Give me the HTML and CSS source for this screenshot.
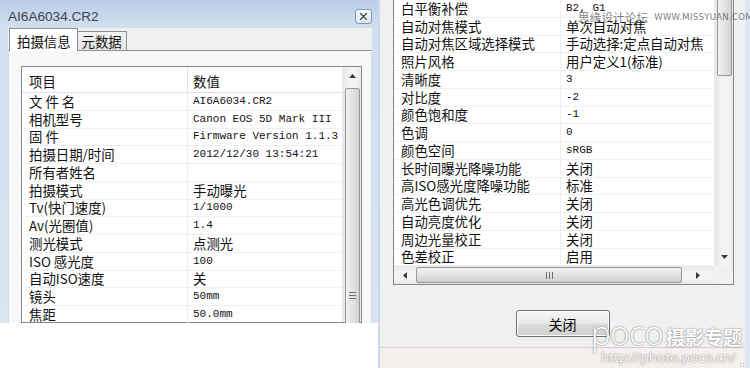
FILE: index.html
```html
<!DOCTYPE html>
<html lang="zh-CN">
<head>
    <meta charset="UTF-8">
    <title>AI6A6034.CR2</title>
<link rel="stylesheet" href="styles.css">
</head>
<body>

<!-- 左：拍摄信息窗口 -->
<div class="left">
    <div class="win-left">
        <div class="titlebar">
            <span class="title">AI6A6034.CR2</span>
            <span class="xbtn">
                <svg width="17" height="15" viewBox="0 0 17 15">
                    <defs>
                        <linearGradient id="xg" x1="0" y1="0" x2="0" y2="1">
                            <stop offset="0" stop-color="#f7f9fc"/>
                            <stop offset="1" stop-color="#d9e2ee"/>
                        </linearGradient>
                    </defs>
                    <rect x="0.5" y="0.5" width="16" height="14" rx="2.5" fill="url(#xg)" stroke="#8797ad"/>
                    <path d="M5.5 4.5 L11.5 10.5 M11.5 4.5 L5.5 10.5" stroke="#ffffff" stroke-width="3.4" stroke-linecap="round"/>
                    <path d="M5.5 4.5 L11.5 10.5 M11.5 4.5 L5.5 10.5" stroke="#4b5563" stroke-width="1.6" stroke-linecap="round"/>
                </svg>
            </span>
        </div>
        <div class="winbody">
            <div class="tabs">
                <span class="tab active">拍摄信息</span>
                <span class="tab">元数据</span>
            </div>
            <div class="page">
                <div class="listbox">
                    <div class="list">
                        <div class="row head"><span class="k">项目</span><span class="v">数值</span></div>
                        <div class="row"><span class="k wide">文件名</span><span class="v mono">AI6A6034.CR2</span></div>
                        <div class="row"><span class="k">相机型号</span><span class="v mono">Canon EOS 5D Mark III</span></div>
                        <div class="row"><span class="k wide">固件</span><span class="v mono">Firmware Version 1.1.3</span></div>
                        <div class="row"><span class="k">拍摄日期/时间</span><span class="v mono">2012/12/30 13:54:21</span></div>
                        <div class="row"><span class="k">所有者姓名</span><span class="v"></span></div>
                        <div class="row"><span class="k">拍摄模式</span><span class="v">手动曝光</span></div>
                        <div class="row"><span class="k">Tv(快门速度)</span><span class="v mono">1/1000</span></div>
                        <div class="row"><span class="k">Av(光圈值)</span><span class="v mono">1.4</span></div>
                        <div class="row"><span class="k">测光模式</span><span class="v">点测光</span></div>
                        <div class="row"><span class="k">ISO 感光度</span><span class="v mono">100</span></div>
                        <div class="row"><span class="k">自动ISO速度</span><span class="v">关</span></div>
                        <div class="row"><span class="k">镜头</span><span class="v mono">50mm</span></div>
                        <div class="row"><span class="k">焦距</span><span class="v mono">50.0mm</span></div>
                    </div>
                    <div class="vscroll">
                        <span class="arrow">
                            <svg width="7" height="4" viewBox="0 0 7 4"><path d="M0 4 L3.5 0 L7 4 Z" fill="#3a3a3a"/></svg>
                        </span>
                        <div class="thumb tall">
                            <span class="grip-h"></span>
                        </div>
                    </div>
                </div>
            </div>
        </div>
    </div>
</div>

<!-- 右：拍摄信息（续） -->
<div class="right">
    <div class="listbox rbox">
        <div class="lb-main">
            <div class="list">
                <div class="row"><span class="k">白平衡补偿</span><span class="v mono">B2, G1</span></div>
                <div class="row"><span class="k">自动对焦模式</span><span class="v">单次自动对焦</span></div>
                <div class="row"><span class="k">自动对焦区域选择模式</span><span class="v">手动选择:定点自动对焦</span></div>
                <div class="row"><span class="k">照片风格</span><span class="v">用户定义1(标准)</span></div>
                <div class="row"><span class="k">清晰度</span><span class="v mono">3</span></div>
                <div class="row"><span class="k">对比度</span><span class="v mono">-2</span></div>
                <div class="row"><span class="k">颜色饱和度</span><span class="v mono">-1</span></div>
                <div class="row"><span class="k">色调</span><span class="v mono">0</span></div>
                <div class="row"><span class="k">颜色空间</span><span class="v mono">sRGB</span></div>
                <div class="row"><span class="k">长时间曝光降噪功能</span><span class="v">关闭</span></div>
                <div class="row"><span class="k">高ISO感光度降噪功能</span><span class="v">标准</span></div>
                <div class="row"><span class="k">高光色调优先</span><span class="v">关闭</span></div>
                <div class="row"><span class="k">自动亮度优化</span><span class="v">关闭</span></div>
                <div class="row"><span class="k">周边光量校正</span><span class="v">关闭</span></div>
                <div class="row"><span class="k">色差校正</span><span class="v">启用</span></div>
            </div>
            <div class="vscroll rv">
                <div class="thumb short"></div>
                <div class="track"></div>
                <span class="arrow">
                    <svg width="7" height="4" viewBox="0 0 7 4"><path d="M0 0 L7 0 L3.5 4 Z" fill="#3a3a3a"/></svg>
                </span>
            </div>
        </div>
        <div class="hscroll">
            <span class="harrow">
                <svg width="4" height="7" viewBox="0 0 4 7"><path d="M4 0 L4 7 L0 3.5 Z" fill="#3a3a3a"/></svg>
            </span>
            <div class="hthumb"><span class="grip-v"></span></div>
            <span class="harrow">
                <svg width="4" height="7" viewBox="0 0 4 7"><path d="M0 0 L4 3.5 L0 7 Z" fill="#3a3a3a"/></svg>
            </span>
            <span class="corner"></span>
        </div>
    </div>

    <div class="buttons">
        <span class="btn">关闭</span>
    </div>

    <div class="statusbar"><span class="sizegrip"></span></div>

    <!-- 水印 -->
    <div class="mark-top"><span class="cn">思缘设计论坛</span><span class="en">WWW.MISSYUAN.COM</span></div>
    <div class="mark-poco">
        <div class="logo"><span class="p">poco</span><span class="zt">摄影专题</span></div>
        <div class="url">http://photo.poco.cn/</div>
    </div>
</div>

</body>
</html>
```

FILE: styles.css
```css
body {
    margin: 0;
    width: 750px;
    height: 368px;
    overflow: hidden;
    display: flex;
    background: #ffffff;
    color: #111111;
    font-family: "Noto Sans CJK SC", sans-serif;
    font-size: 13.4px;
}

/* ---- left window ---- */
.left {
    width: 378px;
    background: #ffffff;
}
.win-left {
    height: 323px;
    overflow: hidden;
    display: flex;
    flex-direction: column;
    background: linear-gradient(#b9cde6, #d0dfef 26px, #d9e5f2);
}
.titlebar {
    flex: none;
    height: 28px;
    display: flex;
    align-items: flex-start;
    justify-content: space-between;
    padding: 9px 6px 0 8px;
    box-sizing: border-box;
}
.title {
    font-family: "Liberation Sans", sans-serif;
    font-size: 13.6px;
    line-height: 16px;
    color: #3d4450;
}
.xbtn {
    display: flex;
}
.winbody {
    flex: 1;
    min-height: 0;
    margin: 0 6px 0 8px;
    background: #f0f0f0;
    display: flex;
    flex-direction: column;
}
.tabs {
    flex: none;
    height: 22px;
    display: flex;
    align-items: flex-end;
    padding-left: 1px;
}
.tab {
    height: 18px;
    padding: 0 4px 0 4px;
    border: 1px solid #8e9199;
    border-bottom: none;
    background: linear-gradient(#f4f4f4, #e2e2e2);
    display: flex;
    align-items: center;
    font-size: 13.4px;
    line-height: 16px;
    margin-left: -1px;
}
.tab.active {
    height: 23px;
    padding: 2px 6px 0 7px;
    box-sizing: border-box;
    background: #ffffff;
    margin-bottom: -1px;
    position: relative;
    z-index: 1;
    margin-left: 0;
}
.page {
    flex: 1;
    min-height: 0;
    border-top: 1px solid #8e9199;
    border-left: 1px solid #dadada;
    border-right: 1px solid #dadada;
    background: #f8f8f8;
    padding: 15px 9px 0 12px;
    display: flex;
}
.listbox {
    flex: 1;
    border: 1px solid #828790;
    background: #ffffff;
    display: flex;
}
.page .listbox {
    align-items: flex-start;
}

/* ---- list rows ---- */
.list {
    flex: 1;
}
.row {
    height: 17.75px;
    display: flex;
    align-items: center;
    border-bottom: 1px solid #f0f0f0;
    box-sizing: border-box;
    white-space: nowrap;
    line-height: 17px;
}
.row.head {
    height: 26px;
    border-bottom: 1px solid #e3e3e3;
}
.k {
    width: 166px;
    flex: none;
    padding-left: 7px;
    box-sizing: border-box;
    border-right: 1px solid #eeeeee;
    align-self: stretch;
    display: flex;
    align-items: center;
}
.head .k, .head .v {
    padding-top: 4px;
}
.head .k {
    border-right: 1px solid #e3e3e3;
}
.k.wide {
    letter-spacing: 3px;
}
.v {
    padding-left: 5px;
    display: flex;
    align-items: center;
}
.v.mono {
    font-family: "Liberation Mono", monospace;
    font-size: 11px;
}

/* ---- scrollbars ---- */
.vscroll {
    width: 18px;
    flex: none;
    align-self: stretch;
    display: flex;
    flex-direction: column;
    align-items: center;
    background: linear-gradient(90deg, #e6e6e6, #f4f4f4 40%, #f4f4f4 70%, #e8e8e8);
    border-left: 1px solid #ececec;
}
.vscroll .arrow {
    flex: none;
    height: 17px;
    display: flex;
    align-items: center;
    justify-content: center;
}
.thumb {
    flex: none;
    width: 15px;
    box-sizing: border-box;
    border: 1px solid #979797;
    border-radius: 2px;
    background: linear-gradient(90deg, #f1f1f1, #e3e3e3 50%, #d2d2d2);
    display: flex;
    flex-direction: column;
    align-items: center;
}
.thumb.tall {
    margin-top: 4px;
    height: 400px;
    padding-top: 203px;
}
.grip-h {
    width: 7px;
    height: 7px;
    background: repeating-linear-gradient(#707070 0 1px, transparent 1px 3px);
}
.thumb.short {
    height: 78px;
    margin-top: -2px;
}
.track {
    flex: 1;
}
.rv .arrow {
    height: 18px;
}

/* ---- right window ---- */
.right {
    flex: 1;
    position: relative;
    background: #f0f0f0;
    border-left: 2px solid #c9d9eb;
    border-right: 5px solid #dce7f3;
    display: flex;
    flex-direction: column;
}
.rbox {
    flex: none;
    margin: 0 11px 0 13px;
    border-top: none;
    flex-direction: column;
}
.lb-main {
    display: flex;
}
.rbox .k {
    width: 167px;
}
.hscroll {
    height: 18px;
    display: flex;
    align-items: center;
    background: linear-gradient(#e9e9e9, #f4f4f4 40%, #f4f4f4 70%, #e6e6e6);
}
.harrow {
    width: 22px;
    display: flex;
    justify-content: center;
}
.hthumb {
    width: 266px;
    height: 16px;
    box-sizing: border-box;
    border: 1px solid #979797;
    border-radius: 2px;
    background: linear-gradient(#f2f2f2, #e2e2e2 50%, #d0d0d0);
    display: flex;
    align-items: center;
    justify-content: center;
}
.hthumb + .harrow {
    width: 31px;
}
.grip-v {
    width: 7px;
    height: 7px;
    background: repeating-linear-gradient(90deg, #707070 0 1px, transparent 1px 3px);
}
.corner {
    flex: 1;
    align-self: stretch;
    background: #f0f0f0;
}
.buttons {
    display: flex;
    justify-content: center;
    padding-top: 25px;
}
.btn {
    width: 94px;
    height: 27px;
    box-sizing: border-box;
    border: 1px solid #707070;
    border-radius: 3px;
    background: linear-gradient(#f6f6f6, #ebebeb 48%, #dddddd 52%, #cfcfcf);
    box-shadow: inset 0 0 0 1px #fbfbfb;
    display: flex;
    align-items: center;
    justify-content: center;
    font-size: 14px;
    color: #000000;
}
.statusbar {
    margin-top: auto;
    height: 20px;
    border-top: 1px solid #d2d2d2;
    background: #f5efee;
    display: flex;
    justify-content: flex-end;
    align-items: flex-end;
}
.sizegrip {
    width: 6px;
    height: 6px;
    background: radial-gradient(circle, #b8b8b8 0.8px, transparent 1px) 0 0 / 3px 3px;
}

/* ---- watermarks ---- */
.mark-top {
    position: absolute;
    top: 9px;
    left: 198px;
    display: flex;
    align-items: center;
    gap: 6px;
    color: rgba(70, 70, 70, 0.7);
    white-space: nowrap;
}
.mark-top .cn {
    font-size: 11.5px;
    letter-spacing: 0.2px;
}
.mark-top .en {
    font-family: "DejaVu Sans", sans-serif;
    font-size: 8.5px;
    letter-spacing: 0.3px;
}
.mark-poco {
    position: absolute;
    right: 3px;
    bottom: 3px;
    color: #ffffff;
    text-shadow: 0 0 2px rgba(110, 110, 110, 0.8), 0 0 1px rgba(110, 110, 110, 0.6);
    white-space: nowrap;
}
.logo {
    display: flex;
    align-items: baseline;
    line-height: 26px;
}
.logo .p {
    font-family: "Open Sans", sans-serif;
    font-size: 33px;
    font-weight: 300;
    letter-spacing: -0.5px;
}
.logo .zt {
    font-size: 19px;
    font-weight: 700;
    margin-left: 3px;
}
.url {
    font-family: "Open Sans", sans-serif;
    font-size: 13.5px;
    line-height: 15px;
    margin-left: 10px;
}
```
